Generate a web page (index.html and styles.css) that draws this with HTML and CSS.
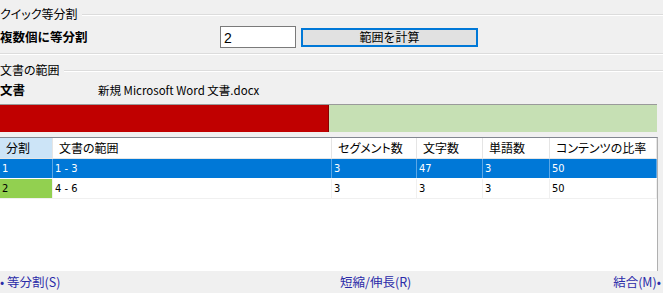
FILE: index.html
```html
<!DOCTYPE html>
<html lang="ja">

<head>
  <meta charset="UTF-8">
  <title>クイック等分割</title>
  <link rel="stylesheet" href="styles.css">
</head>

<body>
  <div class="group-title">
    <span class="title-text">クイック等分割</span>
    <span class="rule"></span>
  </div>

  <div class="split-row">
    <span class="bold-label">複数個に等分割</span>
    <input class="count-input" type="text" value="2">
    <button class="calc-btn">範囲を計算</button>
  </div>

  <div class="full-rule"></div>

  <div class="group-title second">
    <span class="title-text">文書の範囲</span>
    <span class="rule"></span>
  </div>

  <div class="doc-row">
    <span class="bold-label doc-label">文書</span>
    <span class="doc-name">新規 Microsoft Word 文書.docx</span>
  </div>

  <div class="ratio-bar">
    <div class="part red" style="width: 50%"></div>
    <div class="part green" style="width: 50%"></div>
  </div>

  <div class="table-box">
    <table class="split-table">
      <thead>
        <tr>
          <th class="col-no sorted">分割</th>
          <th class="col-range">文書の範囲</th>
          <th class="col-seg">セグメント数</th>
          <th class="col-chars">文字数</th>
          <th class="col-words">単語数</th>
          <th class="col-ratio">コンテンツの比率</th>
        </tr>
      </thead>
      <tbody>
        <tr class="selected">
          <td>1</td>
          <td>1 - 3</td>
          <td>3</td>
          <td>47</td>
          <td>3</td>
          <td>50</td>
        </tr>
        <tr>
          <td class="green-cell">2</td>
          <td>4 - 6</td>
          <td>3</td>
          <td>3</td>
          <td>3</td>
          <td>50</td>
        </tr>
      </tbody>
    </table>
  </div>

  <div class="footer">
    <a class="link left">• 等分割(S)</a>
    <a class="link middle">短縮/伸長(R)</a>
    <a class="link right">結合(M)•</a>
  </div>
</body>

</html>
```

FILE: styles.css
```css
/* General */
body {
  margin: 0;
  width: 663px;
  height: 293px;
  overflow: hidden;
  background-color: #f0f0f0;
  font-family: "Noto Sans CJK JP", "Noto Sans", sans-serif;
  font-size: 12px;
  line-height: 16px;
  color: #000;
  font-feature-settings: "palt";
}

/* Group titles */
.group-title {
  display: flex;
  align-items: center;
  height: 16px;
  margin-top: 6px;
}

.group-title.second {
  margin-top: 7px;
}

.title-text {
  padding-right: 4px;
  white-space: nowrap;
}

.rule {
  flex: 1;
  height: 1px;
  background-color: #dcdcdc;
  border-bottom: 1px solid #fff;
  margin-top: 1px;
}

.full-rule {
  height: 1px;
  background-color: #dcdcdc;
  border-bottom: 1px solid #fff;
  margin-top: 5px;
}

/* Split row */
.split-row {
  display: flex;
  align-items: center;
  height: 22px;
  margin-top: 4px;
}

.bold-label {
  font-weight: bold;
  font-size: 12.5px;
  width: 220px;
  font-feature-settings: normal;
}

.count-input {
  box-sizing: border-box;
  width: 76px;
  height: 22px;
  margin: 0;
  padding: 1px 3px 0;
  border: 1px solid #7a7a7a;
  background-color: #fff;
  font-family: "Liberation Sans", sans-serif;
  font-size: 14px;
  outline: none;
}

.calc-btn {
  box-sizing: border-box;
  width: 177px;
  height: 19px;
  margin: 0 0 0 5px;
  padding: 0;
  border: 2px solid #0078d7;
  background-color: #e1e1e1;
  font-family: "Noto Sans CJK JP", sans-serif;
  font-size: 12px;
  line-height: 14px;
  color: #000;
}

/* Document row */
.doc-row {
  display: flex;
  align-items: center;
  height: 18px;
  margin-top: 3px;
}

.doc-label {
  width: 98px;
}

.doc-name {
  font-size: 11.5px;
}

/* Ratio bar */
.ratio-bar {
  display: flex;
  width: 657px;
  height: 28px;
  margin-top: 5px;
  border-top: 1px solid #9a9a9a;
  box-sizing: border-box;
}

.part.red {
  background-color: #c00000;
  border-right: 1px solid #8a0000;
}

.part.green {
  background-color: #c6e0b4;
}

/* Table */
.table-box {
  box-sizing: border-box;
  width: 658px;
  height: 134px;
  margin-top: 5px;
  background-color: #fff;
  border-top: 1px solid #828790;
  border-right: 1px solid #b0b0b0;
}

.split-table {
  width: 657px;
  border-collapse: collapse;
  table-layout: fixed;
}

.split-table th {
  height: 20px;
  padding: 0 0 0 6px;
  font-weight: normal;
  text-align: left;
  border-right: 1px solid #e5e5e5;
  border-bottom: 1px solid #e5e5e5;
  white-space: nowrap;
}

.split-table th.sorted {
  background-color: #cce4f7;
}

.col-no { width: 46px; }
.col-range { width: 272px; }
.col-seg { width: 78px; }
.col-chars { width: 59px; }
.col-words { width: 60px; }

.split-table td {
  height: 19px;
  padding: 0 0 0 2px;
  font-family: "DejaVu Sans Condensed", "Liberation Sans Narrow", sans-serif;
  font-size: 11px;
  border-right: 1px solid #f0f0f0;
  border-bottom: 1px solid #f0f0f0;
}

.split-table tr.selected td {
  background-color: #0078d7;
  color: #fff;
  border-right: 1px solid #5ca7e6;
  border-bottom: 1px solid #fff;
}

.split-table td.green-cell {
  background-color: #92d050;
}

/* Footer */
.footer {
  display: flex;
  align-items: center;
  height: 22px;
  font-size: 12.5px;
}

.link {
  color: #2b2ba8;
  white-space: nowrap;
}

.link.left {
  width: 340px;
}

.link.middle {
  flex: 1;
}

.link.right {
  padding-right: 2px;
}
```
